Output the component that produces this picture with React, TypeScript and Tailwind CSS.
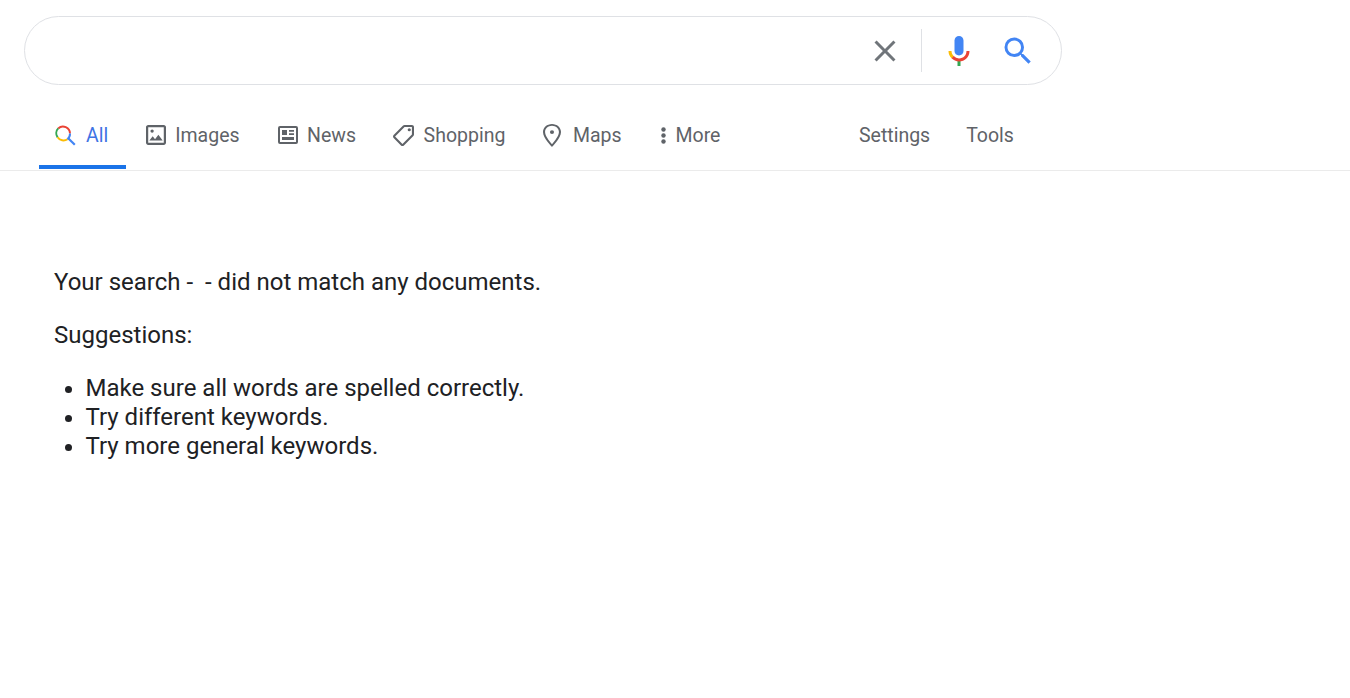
import type { ReactNode } from 'react';

const SEARCH_PATH =
    'M15.5 14h-.79l-.28-.27A6.471 6.471 0 0 0 16 9.5 6.5 6.5 0 1 0 9.5 16c1.61 0 3.09-.59 4.23-1.57l.27.28v.79l5 4.99L20.49 19l-4.99-5zm-6 0C7.01 14 5 11.99 5 9.5S7.01 5 9.5 5 14 7.01 14 9.5 11.99 14 9.5 14z';

// ── Icons ────────────────────────────────────────────────────────────────────

function MicIcon() {
    return (
        <svg viewBox="0 0 24 24" className="h-9 w-9 shrink-0">
            <path fill="#4285f4" d="m12 15c1.66 0 3-1.31 3-2.97v-7.02c0-1.66-1.34-3.01-3-3.01s-3 1.34-3 3.01v7.02c0 1.66 1.34 2.97 3 2.97z" />
            <path fill="#34a853" d="m11 18.08h2v3.92h-2z" />
            <path fill="#fbbc05" d="m7.05 16.87c-1.27-1.33-2.05-2.83-2.05-4.87h2c0 1.45 0.56 2.42 1.47 3.38v0.32l-1.15 1.18z" />
            <path fill="#ea4335" d="m12 16.93a4.97 5.25 0 0 1 -3.54 -1.55l-1.41 1.49c1.26 1.34 3.02 2.13 4.95 2.13 3.87 0 6.99-2.92 6.99-6.99h-2c0 2.91-2.02 4.92-5 4.92z" />
        </svg>
    );
}

function AllIcon() {
    return (
        <svg viewBox="0 0 21 21" className="-mt-0.5 h-[21px] w-[21px] shrink-0" fill="none" strokeWidth="2">
            <path d="M15 8.5A7 7 0 0 0 3.2 3.4" stroke="#ea4335" />
            <path d="M3.2 3.4A7 7 0 0 0 2.6 12.3" stroke="#34a853" />
            <path d="M2.6 12.3A7 7 0 0 0 12.5 14.2" stroke="#fbbc05" />
            <path d="M12.5 14.2A7 7 0 0 0 15 8.5" stroke="#4285f4" />
            <path d="M13.2 13.2L19.8 19.8" stroke="#4285f4" strokeWidth="2.2" />
        </svg>
    );
}

function ImagesIcon() {
    return (
        <svg viewBox="3 3 18 18" className="h-5 w-5 shrink-0" fill="#5f6368">
            <path d="M19 5v14H5V5h14m0-2H5c-1.1 0-2 .9-2 2v14c0 1.1.9 2 2 2h14c1.1 0 2-.9 2-2V5c0-1.1-.9-2-2-2zm-4.86 8.86l-3 3.87L9 13.14 6 17h12l-3.86-5.14z" />
            <circle cx="8.5" cy="8.5" r="1.5" />
        </svg>
    );
}

function NewsIcon() {
    return (
        <svg viewBox="0 0 20 18" className="h-[18px] w-5 shrink-0" fill="#5f6368">
            <path fillRule="evenodd" d="M2 0h16a2 2 0 0 1 2 2v14a2 2 0 0 1-2 2H2a2 2 0 0 1-2-2V2a2 2 0 0 1 2-2zm0 2v14h16V2H2z" />
            <path d="M4 4h5v5H4zM11 4h5v1.7h-5zM11 7.3h5V9h-5zM4 11h12v3H4z" />
        </svg>
    );
}

function TagIcon() {
    return (
        <svg viewBox="2 2 20 20" className="h-[21px] w-[21px] shrink-0 -scale-x-100" fill="#5f6368">
            <path d="M21.41 11.58l-9-9C12.05 2.22 11.55 2 11 2H4c-1.1 0-2 .9-2 2v7c0 .55.22 1.05.59 1.42l9 9c.36.36.86.58 1.41.58s1.05-.22 1.41-.59l7-7c.37-.36.59-.86.59-1.41s-.23-1.06-.59-1.42zM13 20.01L4 11V4h7v-.01l9 9-7 7.02z" />
            <circle cx="6.5" cy="6.5" r="1.5" />
        </svg>
    );
}

function PinIcon() {
    return (
        <svg viewBox="5 2 14 20" preserveAspectRatio="none" className="h-[23px] w-[18px] shrink-0" fill="#5f6368">
            <path d="M12 2C8.13 2 5 5.13 5 9c0 5.25 7 13 7 13s7-7.75 7-13c0-3.87-3.13-7-7-7zM6.6 9c0-3 2.4-5.4 5.4-5.4s5.4 2.4 5.4 5.4c0 3-3 7.6-5.4 10.6C9.6 16.6 6.6 12 6.6 9z" />
            <circle cx="12" cy="9" r="1.6" />
        </svg>
    );
}

function DotsIcon() {
    return (
        <svg viewBox="0 0 5 17" className="h-[17px] w-[5px] shrink-0" fill="#5f6368">
            <circle cx="2.5" cy="2.5" r="2.2" />
            <circle cx="2.5" cy="8.5" r="2.2" />
            <circle cx="2.5" cy="14.5" r="2.2" />
        </svg>
    );
}

// ── Tabs ─────────────────────────────────────────────────────────────────────

function Tab({ icon, label, gap = 'gap-[9px]', pad = 'pl-5' }: { icon?: ReactNode; label: string; gap?: string; pad?: string }) {
    return (
        <a className={`flex h-full items-center pr-[18px] pb-[7px] text-[#5f6368] [&>svg]:-mt-0.5 ${gap} ${pad}`}>
            {icon}
            {label}
        </a>
    );
}

// ── Page ─────────────────────────────────────────────────────────────────────

export default function App() {
    return (
        <div className="min-h-[698px] bg-white font-['Roboto',sans-serif] text-[#202124]">
            {/* Search box */}
            <div className="pt-4 pl-6">
                <div className="flex h-[69px] w-[1038px] items-center justify-end rounded-[35px] border border-[#dfe1e5] pr-[25px]">
                    <svg viewBox="0 0 24 24" className="h-9 w-9 shrink-0" fill="#70757a">
                        <path d="M19 6.41L17.59 5 12 10.59 6.41 5 5 6.41 10.59 12 5 17.59 6.41 19 12 13.41 17.59 19 19 17.59 13.41 12z" />
                    </svg>
                    <div className="mr-[19px] ml-[18px] h-[43px] w-px bg-[#dfe1e5]" />
                    <MicIcon />
                    <svg viewBox="0 0 24 24" className="ml-[23px] h-9 w-9 shrink-0" fill="#4285f4">
                        <path d={SEARCH_PATH} />
                    </svg>
                </div>
            </div>

            {/* Tabs */}
            <nav className="mt-[25px] flex h-[61px] border-b border-[#ebebeb] pb-px pl-[39px] text-[19.5px]">
                <a className="flex h-full items-center gap-[10px] border-b-4 border-[#1a73e8] pr-[18px] pb-[3px] pl-4 text-[#3f74e4]">
                    <AllIcon />
                    All
                </a>
                <Tab icon={<ImagesIcon />} label="Images" />
                <Tab icon={<NewsIcon />} label="News" gap="gap-[9.5px]" />
                <Tab icon={<TagIcon />} label="Shopping" gap="gap-[9.5px]" pad="pl-[19px]" />
                <Tab icon={<PinIcon />} label="Maps" gap="gap-[12px]" pad="pl-[19.5px]" />
                <Tab icon={<DotsIcon />} label="More" gap="gap-[10px]" pad="pl-[21px]" />
                <div className="ml-[102.5px] flex h-full">
                    <Tab label="Settings" pad="pl-[18px]" />
                    <Tab label="Tools" pad="pl-[18px]" />
                </div>
            </nav>

            {/* No results */}
            <div className="pt-[97px] pl-[54px] text-[24px] leading-[29px]">
                <p>Your search - &nbsp;- did not match any documents.</p>
                <p className="mt-6">Suggestions:</p>
                <ul className="mt-6 list-disc pl-[31.5px]">
                    <li>Make sure all words are spelled correctly.</li>
                    <li>Try different keywords.</li>
                    <li>Try more general keywords.</li>
                </ul>
            </div>
        </div>
    );
}
